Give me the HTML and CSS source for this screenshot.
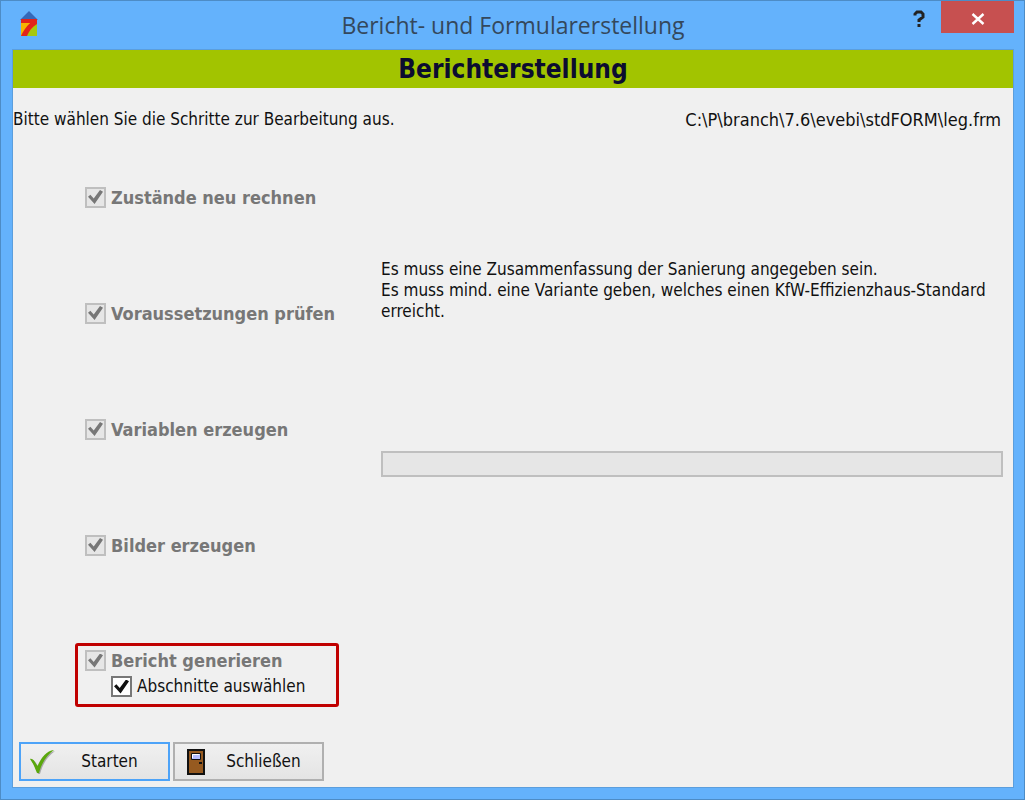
FILE: index.html
```
<!DOCTYPE html>
<html lang="de">
<head>
<meta charset="UTF-8">
<meta name="viewport" content="width=device-width, initial-scale=1.0">
<title>Bericht- und Formularerstellung</title>
<link rel="stylesheet" href="styles.css">
</head>
<body>
<div class="window">
  <header class="titlebar">
    <svg class="app-icon" viewBox="0 0 18 26" aria-hidden="true">
      <path d="M0 9 9 0l9 9z" fill="#3568b8"/>
      <path d="M1 9h16v16H1z" fill="#f6b400"/>
      <path d="M17 12v13H5z" fill="#a6c810"/>
      <path d="M1 8h16v5C12 16 9 20 7 25H1c2-5 5-9 9-13H1z" fill="#e2231a"/>
      <path d="M1 12h9c-4 3-7 6-9 10z" fill="#f6b400"/>
    </svg>
    <h1 class="window-title">Bericht- und Formularerstellung</h1>
    <div class="window-buttons">
      <button class="help-button" type="button" aria-label="Hilfe">
        <svg width="12" height="18" viewBox="0 0 12 18"><path d="M2 5.500V4l2-2h4l2 2v3L6 10v2" fill="none" stroke="#222" stroke-width="3"/><path d="M4.500 14h3v3h-3z" fill="#222"/></svg>
      </button>
      <button class="close-button" type="button" aria-label="Fenster schließen">
        <svg width="14" height="12" viewBox="0 0 14 12"><path d="M1.500 1l11 10M12.500 1l-11 10" stroke="#fff" stroke-width="2.400"/></svg>
      </button>
    </div>
  </header>
  <main class="client">
    <h2 class="banner">Berichterstellung</h2>
    <div class="intro">
      <span>Bitte wählen Sie die Schritte zur Bearbeitung aus.</span>
      <span class="form-path">C:\P\branch\7.6\evebi\stdFORM\leg.frm</span>
    </div>
    <div class="steps">
      <div class="step">
        <label class="check"><input type="checkbox" checked disabled>Zustände neu rechnen</label>
      </div>
      <div class="step">
        <label class="check"><input type="checkbox" checked disabled>Voraussetzungen prüfen</label>
        <p class="step-info">Es muss eine Zusammenfassung der Sanierung angegeben sein.<br>Es muss mind. eine Variante geben, welches einen KfW-Effizienzhaus-Standard erreicht.</p>
      </div>
      <div class="step">
        <label class="check"><input type="checkbox" checked disabled>Variablen erzeugen</label>
        <progress class="step-progress" value="0" max="100" aria-label="Fortschritt"></progress>
      </div>
      <div class="step">
        <label class="check"><input type="checkbox" checked disabled>Bilder erzeugen</label>
      </div>
      <div class="step">
        <div class="highlight">
          <label class="check"><input type="checkbox" checked disabled>Bericht generieren</label>
          <label class="check sub-check"><input type="checkbox" checked>Abschnitte auswählen</label>
        </div>
      </div>
    </div>
    <footer class="actions">
      <button class="action action-default" type="button">
        <svg width="26" height="26" viewBox="0 0 26 26" aria-hidden="true">
          <path d="M2 11c3-1 5 3 7.500 7C13 10 18 4 26 2 19 7 14 14 11 25H9C7 20 5 15 2 11z" fill="#aaa"/>
          <path d="M1 10c3-1 5 3 7.500 7C12 9 17 2 25 1 18 6 13 13 10 24H8C6 19 4 14 1 10z" fill="#5aa80c"/>
        </svg>
        <span>Starten</span>
      </button>
      <button class="action" type="button">
        <svg width="26" height="26" viewBox="0 0 26 26" aria-hidden="true">
          <path d="M5 1h16v24H5z" fill="#965a20" stroke="#111" stroke-width="2"/>
          <path d="M8.500 4.500h9v6h-9z" fill="#b4bcff" stroke="#111"/>
          <path d="M9.500 9V5.500h7" fill="none" stroke="#fff"/>
          <path d="M16 13h3v2h-3z" fill="#111"/>
        </svg>
        <span>Schließen</span>
      </button>
    </footer>
  </main>
</div>
</body>
</html>
```

FILE: styles.css
```
* {
  box-sizing: border-box;
}
body {
  margin: 0;
  font-family: "DejaVu Sans Condensed", "Noto Sans", sans-serif;
  font-size: 17px;
  line-height: 21px;
  color: #111;
}
button {
  font: inherit;
  color: inherit;
  padding: 0;
}

/* Window frame */
.window {
  display: flex;
  flex-direction: column;
  min-height: 100vh;
  padding: 0 10px 11px 11px;
  background: #64b2fc;
  border: 1px solid #4d8cc6;
}
.titlebar {
  display: grid;
  grid-template-columns: 1fr auto 1fr;
  align-items: start;
  height: 48px;
}
.app-icon {
  width: 18px;
  height: 26px;
  margin: 10px 0 0 8px;
}
.window-title {
  margin: 8px 0 0;
  font-family: "Open Sans", sans-serif;
  font-size: 23px;
  font-weight: normal;
  line-height: 32px;
  color: #34485c;
}
.window-buttons {
  display: flex;
  justify-content: flex-end;
}
.help-button {
  width: 44px;
  height: 32px;
  border: 0;
  background: none;
}
.close-button {
  width: 73px;
  height: 32px;
  border: 0;
  background: #c75050;
}
.help-button svg,
.close-button svg {
  display: block;
  margin: 3px auto 0;
}

/* Content */
.client {
  flex: 1;
  display: flex;
  flex-direction: column;
  background: #f0f0f0;
  border: 1px solid #5b9edd;
}
.banner {
  margin: 0;
  padding-top: 1px;
  font-size: 26px;
  line-height: 37px;
  text-align: center;
  color: #0c0c30;
  background: #a2c400;
}
.intro {
  display: flex;
  justify-content: space-between;
  padding: 21px 12px 9px 0;
}
.form-path {
  font-size: 18px;
}
.steps {
  flex: 1;
  display: grid;
  grid-auto-rows: 1fr;
}
.step {
  display: grid;
  grid-template-columns: 296px 1fr;
  align-items: center;
  padding: 0 10px 0 72px;
}
.check {
  display: flex;
  align-items: center;
  gap: 5px;
  font-size: 18px;
  font-weight: bold;
  color: #777;
}
.check input {
  appearance: none;
  display: grid;
  place-items: center;
  width: 21px;
  height: 21px;
  margin: 0;
  color: #111;
  background: #fff;
  border: 2px solid #777;
}
.check input:disabled {
  color: #777;
  background: #e6e6e6;
  border-color: #bfbfbf;
}
.check input:checked::before {
  content: "";
  width: 15px;
  height: 14px;
  background: currentColor;
  clip-path: polygon(0 48%, 16% 34%, 38% 60%, 80% 0, 100% 12%, 44% 100%);
}
.step-info {
  align-self: start;
  margin: 4px 0 0;
}
.step-progress {
  appearance: none;
  align-self: end;
  width: 100%;
  height: 26px;
  margin-bottom: 10px;
  background: #e6e6e6;
  border: 2px solid #bfbfbf;
}
.step-progress::-webkit-progress-bar {
  background: #e6e6e6;
}
.highlight {
  align-self: end;
  display: grid;
  gap: 5px;
  width: 264px;
  margin: 0 0 12px -10px;
  padding: 4px 7px 7px;
  border: 3px solid #c00000;
  border-radius: 3px;
}
.sub-check {
  padding-left: 26px;
  font-size: 17px;
  font-weight: normal;
  color: #111;
}

/* Buttons */
.actions {
  display: flex;
  gap: 3px;
  padding: 23px 6px 6px;
}
.action {
  display: grid;
  grid-template-columns: 26px 1fr;
  align-items: center;
  width: 151px;
  height: 39px;
  padding: 0 4px 0 8px;
  background: linear-gradient(#f0f0f0, #e4e4e4);
  border: 2px solid #b0b0b0;
}
.action-default {
  border-color: #4da3f8;
}
```
